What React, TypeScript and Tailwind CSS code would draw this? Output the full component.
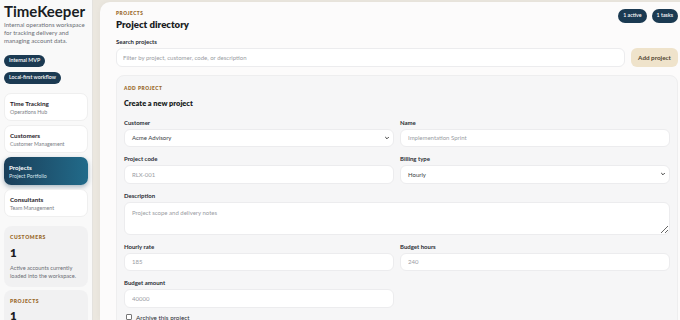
import { ReactNode } from 'react';

const navItems = [
  { title: 'Time Tracking', sub: 'Operations Hub' },
  { title: 'Customers', sub: 'Customer Management' },
  { title: 'Projects', sub: 'Project Portfolio', active: true },
  { title: 'Consultants', sub: 'Team Management' },
];

const stats = [
  { label: 'Customers', value: '1', note: 'Active accounts currently loaded into the workspace.' },
  { label: 'Projects', value: '1', note: 'Projects available for time entries.' },
];

function Field({ label, children }: { label: string; children: ReactNode }) {
  return (
    <label className="flex flex-col gap-[3px]">
      <span className="text-[6px] font-bold leading-[7px] text-[#2a2d35]">{label}</span>
      {children}
    </label>
  );
}

function TextInput({ placeholder }: { placeholder: string }) {
  return (
    <input
      placeholder={placeholder}
      className="h-[18.5px] w-full rounded-[6px] border border-[#ececee] bg-white px-[7px] text-[6px] text-[#2a2d35] placeholder:text-[#9a9ca3] outline-none"
    />
  );
}

function SelectBox({ value }: { value: string }) {
  return (
    <div className="flex h-[18.5px] w-full items-center justify-between rounded-[6px] border border-[#ececee] bg-white pl-[7px] pr-[3px] text-[6px] text-[#3a3d45]">
      <span>{value}</span>
      <svg width="6" height="6" viewBox="0 0 10 10" fill="none">
        <path d="M2.5 3.8 L5 6.3 L7.5 3.8" stroke="#333" strokeWidth="1.6" strokeLinecap="round" strokeLinejoin="round" />
      </svg>
    </div>
  );
}

export default function App() {
  return (
    <div className="h-[320px] w-[680px] overflow-hidden bg-[#ebe7df] font-['Lato','Liberation_Sans',sans-serif]">
      <div className="flex h-full w-[700px] gap-[7px]">
        {/* sidebar */}
        <aside className="flex w-[93px] shrink-0 flex-col border-r border-[#e4e2de] bg-[#f9f9f9] px-[4px] pt-[3px]">
          <h1 className="text-[15px] font-bold leading-[16px] text-[#1a1d24]">TimeKeeper</h1>
          <p className="mt-[2px] text-[6.1px] leading-[8px] text-[#6c6f76]">
            Internal operations workspace for tracking delivery and managing account data.
          </p>
          <div className="mt-[10px] flex flex-col items-start gap-[5px]">
            <span className="flex h-[12px] items-center rounded-full bg-[#1b3a52] px-[5px] text-[5.3px] font-semibold text-white">
              Internal MVP
            </span>
            <span className="flex h-[12px] items-center rounded-full bg-[#1b3a52] px-[5px] text-[5.3px] font-semibold text-white">
              Local-first workflow
            </span>
          </div>
          <nav className="mt-[9px] flex flex-col gap-[4px]">
            {navItems.map((item) => (
              <div
                key={item.title}
                className={
                  item.active
                    ? 'flex h-[28px] flex-col justify-center rounded-[7px] bg-gradient-to-r from-[#1a3f5a] to-[#216b8a] px-[5px] shadow-[0_2px_5px_rgba(20,60,90,0.35)]'
                    : 'flex h-[28px] flex-col justify-center rounded-[7px] border border-[#efefef] bg-white px-[5px]'
                }
              >
                <span className={`text-[6.3px] font-bold leading-[9px] ${item.active ? 'text-white' : 'text-[#1f2229]'}`}>
                  {item.title}
                </span>
                <span className={`text-[5.3px] leading-[8px] ${item.active ? 'text-[#d5e3ec]' : 'text-[#7b7e85]'}`}>
                  {item.sub}
                </span>
              </div>
            ))}
          </nav>
          <div className="mt-[9px] flex flex-col gap-[3px]">
            {stats.map((s) => (
              <div key={s.label} className="rounded-[8px] bg-[#f1f1f2] px-[6px] pb-[7px] pt-[8px]">
                <div className="text-[5px] font-extrabold uppercase tracking-[0.12em] text-[#9a6a2c]">{s.label}</div>
                <div className="mt-[5px] text-[11.5px] font-extrabold leading-[12px] text-[#1a1d24]">{s.value}</div>
                <p className="mt-[5px] text-[5.6px] leading-[8px] text-[#6c6f76]">{s.note}</p>
              </div>
            ))}
          </div>
        </aside>

        {/* main */}
        <main className="mt-[2px] flex-1 rounded-tl-[10px] bg-[#fcfbfb] pl-[16px] pr-[22px] pt-[8px] shadow-[0_0_6px_rgba(0,0,0,0.04)]">
          <div className="flex items-start justify-between">
            <div>
              <div className="text-[4.7px] font-extrabold uppercase leading-[6px] tracking-[0.12em] text-[#9a6a2c]">Projects</div>
              <h2 className="mt-[3px] text-[9.6px] font-extrabold leading-[12px] text-[#1a1d24]">Project directory</h2>
            </div>
            <div className="-mt-[1px] flex gap-[5px]">
              <span className="flex h-[14px] items-center rounded-full bg-[#1b3a52] px-[5px] text-[5.3px] font-semibold text-white">
                1 active
              </span>
              <span className="flex h-[14px] items-center rounded-full bg-[#1b3a52] px-[5px] text-[5.3px] font-semibold text-white">
                1 tasks
              </span>
            </div>
          </div>

          <div className="mt-[7px] text-[6px] font-bold leading-[7px] text-[#2a2d35]">Search projects</div>
          <div className="mt-[3px] flex gap-[6px]">
            <input
              placeholder="Filter by project, customer, code, or description"
              className="h-[18.5px] flex-1 rounded-[6px] border border-[#ececee] bg-white px-[6px] text-[6px] placeholder:text-[#9a9ca3] outline-none"
            />
            <button className="h-[18.5px] w-[47px] rounded-[6px] bg-[#efe3cb] text-[6.3px] font-bold text-[#4f4330]">
              Add project
            </button>
          </div>

          <section className="mt-[8px] rounded-[8px] border border-[#eeeeef] bg-[#f6f6f7] px-[7px] pb-[8px] pt-[9px]">
            <div className="text-[4.8px] font-extrabold uppercase leading-[6px] tracking-[0.11em] text-[#9a6a2c]">Add project</div>
            <h3 className="mt-[8px] text-[7.4px] font-extrabold leading-[9px] text-[#1a1d24]">Create a new project</h3>

            <div className="mt-[11px] grid grid-cols-2 gap-x-[6px] gap-y-[8px]">
              <Field label="Customer">
                <SelectBox value="Acme Advisory" />
              </Field>
              <Field label="Name">
                <TextInput placeholder="Implementation Sprint" />
              </Field>
              <Field label="Project code">
                <TextInput placeholder="RLX-001" />
              </Field>
              <Field label="Billing type">
                <SelectBox value="Hourly" />
              </Field>
              <div className="col-span-2">
                <Field label="Description">
                  <textarea
                    placeholder="Project scope and delivery notes"
                    className="block h-[33px] w-full resize-y rounded-[6px] border border-[#ececee] bg-white px-[7px] py-[5px] text-[6px] placeholder:text-[#9a9ca3] outline-none"
                  />
                </Field>
              </div>
              <Field label="Hourly rate">
                <TextInput placeholder="185" />
              </Field>
              <Field label="Budget hours">
                <TextInput placeholder="240" />
              </Field>
              <Field label="Budget amount">
                <TextInput placeholder="40000" />
              </Field>
              <div />
            </div>
            <label className="mt-[5px] flex items-center gap-[4px] pl-[2px] text-[6.3px] text-[#2a2d35]">
              <span className="h-[6px] w-[6px] rounded-[1px] border border-[#777] bg-white" />
              Archive this project
            </label>
          </section>
        </main>
      </div>
    </div>
  );
}
